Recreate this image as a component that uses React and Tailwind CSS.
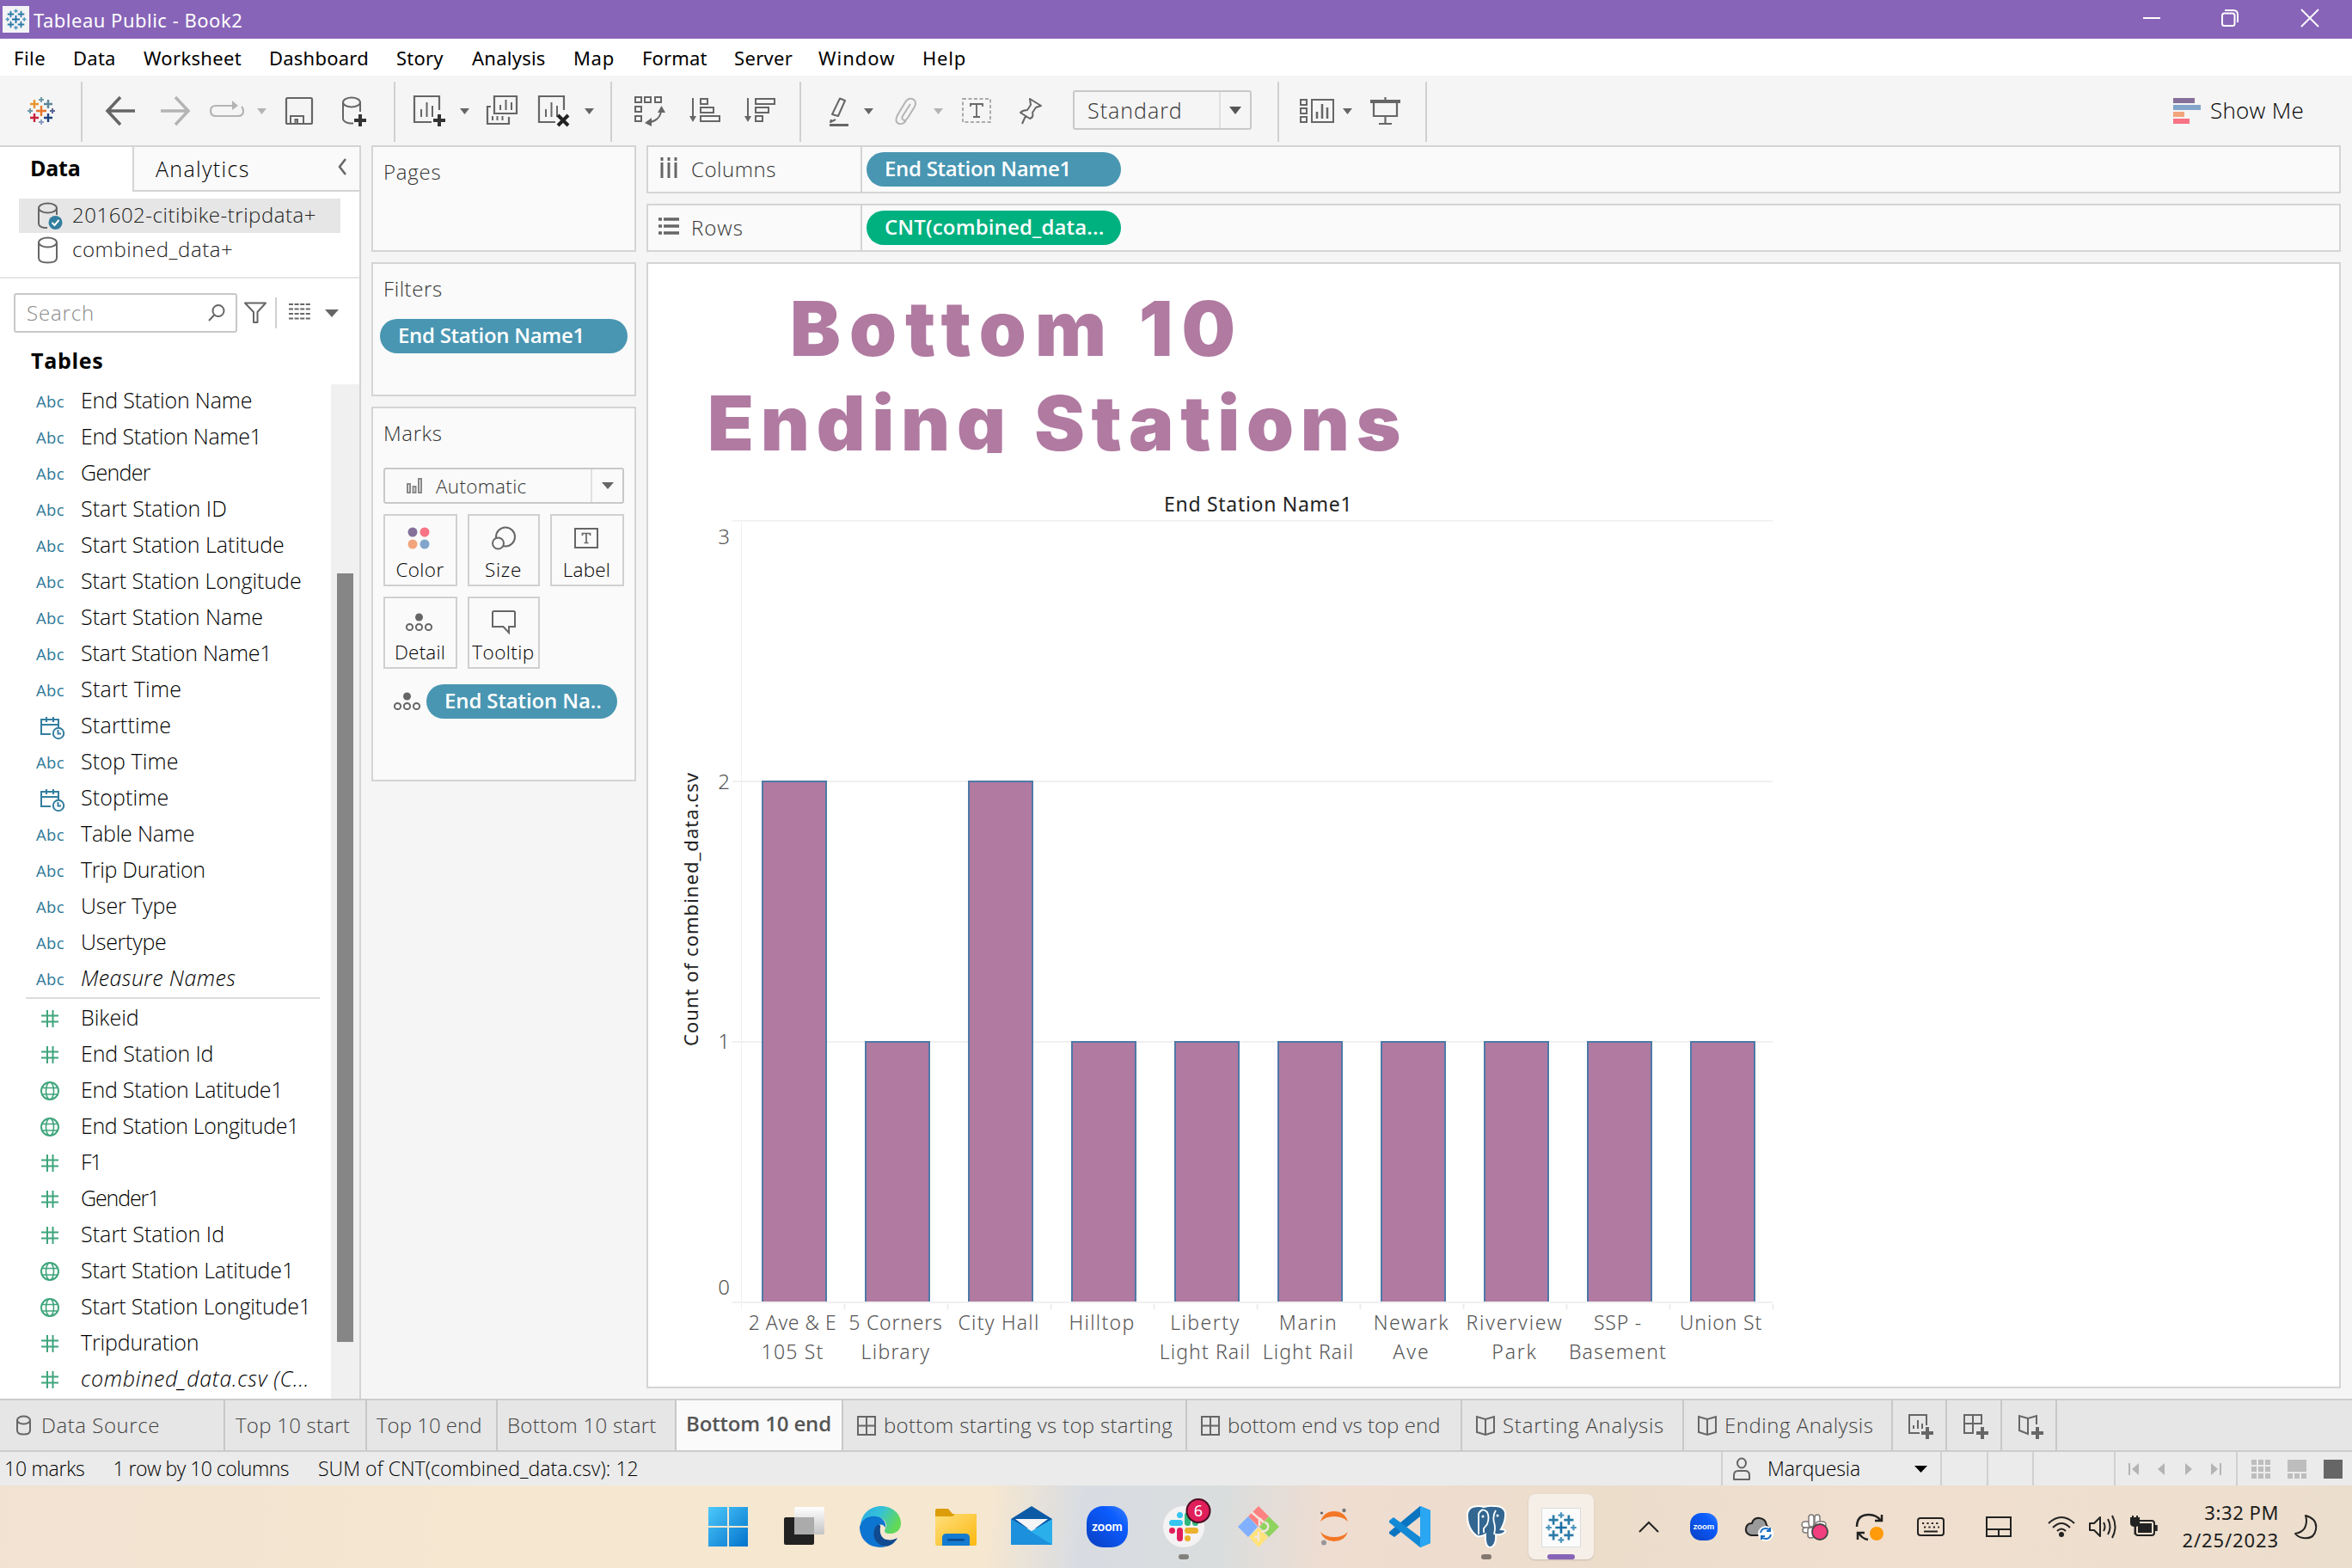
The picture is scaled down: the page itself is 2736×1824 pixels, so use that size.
import React, { useLayoutEffect, useRef, useState } from "react";

/* Single-line text whose tracking is tuned so that it spans exactly `w` pixels. */
function T({ w, className = "", children }) {
  const ref = useRef(null);
  const [spacing, setSpacing] = useState(0);
  useLayoutEffect(() => {
    if (w) setSpacing((w + 2 - ref.current.offsetWidth) / String(children).length);
  }, [w, children]);
  return (
    <span ref={ref} className={"inline-block shrink-0 whitespace-pre " + className} style={{ letterSpacing: spacing }}>
      {children}
    </span>
  );
}

function Ico({ w, h = 36, className = "", children }) {
  return (
    <svg
      width={w}
      height={h}
      viewBox={`0 0 ${w} ${h}`}
      fill="none"
      stroke="#666"
      strokeWidth="2"
      className={"block shrink-0 overflow-visible " + className}
    >
      {children}
    </svg>
  );
}

const Plus = ({ x, y, r, c, s = 2 }) => (
  <path d={`M${x - r} ${y}H${x + r}M${x} ${y - r}V${y + r}`} stroke={c} strokeWidth={s} />
);

function Sparkle({ blue }) {
  const k = blue
    ? ["#1c6fa5", "#2b7ba8", "#2b7ba8", "#2b7ba8", "#2b7ba8", "#4c94bd", "#4c94bd", "#4c94bd", "#4c94bd"]
    : ["#e8762b", "#e8952f", "#5b879b", "#c9223b", "#1f447e", "#7199a6", "#8a9bc0", "#7199a6", "#5b6591"];
  return (
    <>
      <Plus x={16} y={18} r={6} c={k[0]} s={2.4} />
      <Plus x={8} y={10} r={5} c={k[1]} s={2.4} />
      <Plus x={24} y={10} r={5} c={k[2]} s={2.4} />
      <Plus x={8} y={26} r={5} c={k[3]} s={2.4} />
      <Plus x={24} y={26} r={5} c={k[4]} s={2.4} />
      <Plus x={16} y={5} r={3} c={k[5]} />
      <Plus x={16} y={31} r={3} c={k[6]} />
      <Plus x={3} y={18} r={3} c={k[7]} />
      <Plus x={29} y={18} r={3} c={k[8]} />
    </>
  );
}

const Caret = ({ className = "", c = "#666" }) => (
  <Ico w={11} className={className}>
    <path d="M0 15H11L5.500 22Z" fill={c} stroke="none" />
  </Ico>
);
const Sep = ({ className = "" }) => <div className={"-mt-4 h-[70px] w-[2px] shrink-0 bg-[#d0d0d0] " + className} />;

const MENU = [
  ["File", 35, "w-[69px]"],
  ["Data", 48, "w-[82px]"],
  ["Worksheet", 112, "w-[146px]"],
  ["Dashboard", 114, "w-[148px]"],
  ["Story", 53, "w-[88px]"],
  ["Analysis", 84, "w-[118px]"],
  ["Map", 46, "w-[80px]"],
  ["Format", 74, "w-[107px]"],
  ["Server", 66, "w-[98px]"],
  ["Window", 87, "w-[121px]"],
  ["Help", 49, "w-[60px]"],
];

function TitleBar() {
  return (
    <div className="flex h-[45px] items-center bg-[#8764b8] font-['Noto_Sans'] text-[22px] text-white">
      <div className="ml-[3px] flex h-[31px] w-[31px] items-center justify-center bg-[#f4f4f6]">
        <svg width="27" height="27" viewBox="0 0 32 36" fill="none">
          <Sparkle blue />
        </svg>
      </div>
      <T w={241} className="ml-[5px] leading-[40px]">Tableau Public - Book2</T>
      <Ico w={20} h={20} className="-mt-1 ml-auto">
        <path d="M0 10H20" stroke="#fff" />
      </Ico>
      <Ico w={20} h={20} className="-mt-1 ml-[71px]">
        <path d="M4 1H14Q19 1 19 6V15" stroke="#fff" />
        <rect x="1" y="4.500" width="14.500" height="14.500" rx="2.500" stroke="#fff" />
      </Ico>
      <Ico w={20} h={20} className="-mt-1 ml-[73px] mr-[39px]">
        <path d="M0 0L20 20M20 0L0 20" stroke="#fff" strokeWidth="1.800" />
      </Ico>
    </div>
  );
}

function MenuBar() {
  return (
    <div className="flex h-[43px] bg-white pl-4 font-['Noto_Sans'] text-[22px] leading-[44px] text-black">
      {MENU.map(([t, w, cls]) => (
        <div key={t} className={"shrink-0 " + cls}>
          <T w={w}>{t}</T>
        </div>
      ))}
    </div>
  );
}

function Toolbar() {
  return (
    <div className="flex h-[81px] items-start bg-[#f5f5f5] pt-[23px]">
      <Ico w={32} className="ml-8">
        <Sparkle />
      </Ico>
      <Sep className="ml-[30px]" />
      <Ico w={34} className="ml-[27px]">
        <path d="M17 2L2 18L17 34M2 18H34" strokeWidth="3.500" />
      </Ico>
      <Ico w={34} className="ml-[30px]">
        <path d="M17 2L32 18L17 34M0 18H32" stroke="#b4b4b4" strokeWidth="3.500" />
      </Ico>
      <Ico w={40} className="ml-[23px]">
        <path d="M30 12H7Q1 12 1 18T7 24H33Q39 24 39 18Q39 15 37 13" stroke="#b4b4b4" strokeWidth="2.200" />
        <path d="M26 6L33 12L26 17Z" fill="#b4b4b4" stroke="none" />
      </Ico>
      <Caret className="ml-[15px]" c="#b4b4b4" />
      <Ico w={32} className="ml-[22px]">
        <rect x="1" y="3" width="30" height="30" rx="1.500" strokeWidth="2.200" />
        <path d="M6 33V24H21V33M11.500 33V28H14V33" />
      </Ico>
      <Ico w={28} className="ml-[34px]">
        <ellipse cx="11" cy="8" rx="10" ry="5.500" />
        <path d="M1 8V27Q1 31 9 32.500H13M21 8V19" />
        <Plus x={21} y={29} r={7} c="#333" s={4} />
      </Ico>
      <Sep className="ml-[32px]" />
      <Ico w={37} className="ml-[21px]">
        <path d="M30 17V1H1V31H21" strokeWidth="2.200" />
        <path d="M9 25V16M15.500 25V8M22 25V12" />
        <Plus x={30} y={29} r={7} c="#333" s={4} />
      </Ico>
      <Caret className="ml-[17px]" />
      <Ico w={36} className="ml-[20px]">
        <path d="M9 1H35V21H9ZM5 13H1V33H26V25" strokeWidth="2.200" />
        <path d="M16 17V11M22.500 17V5M29 17V8M7 29V24M12.500 29V24M18.500 29V24" />
      </Ico>
      <Ico w={37} className="ml-[24px]">
        <path d="M30 17V1H1V31H20" strokeWidth="2.200" />
        <path d="M9 25V16M15.500 25V8M22 25V12" />
        <path d="M23 23L35 35M35 23L23 35" stroke="#222" strokeWidth="4" />
      </Ico>
      <Caret className="ml-[17px]" />
      <Sep className="ml-[19px]" />
      <Ico w={34} className="ml-[26px]">
        <path d="M1 2H8V8H1ZM12 2H19V8H12ZM24 2H31V8H24ZM1 13H8V19H1ZM1 24H8V30H1Z" />
        <path d="M31 18Q30 28 19 31" />
        <path d="M31.500 12L36 20H27Z M12 32L20 26V36Z" fill="#666" stroke="none" />
      </Ico>
      <Ico w={36} className="ml-[30px]">
        <path d="M4 3V26" />
        <path d="M0 24H8L4 31Z" fill="#666" stroke="none" />
        <path d="M13 4H21V10H13ZM13 14H28V20H13ZM13 24H35V30H13Z" />
      </Ico>
      <Ico w={36} className="ml-[28px]">
        <path d="M4 3V26" />
        <path d="M0 24H8L4 31Z" fill="#666" stroke="none" />
        <path d="M13 4H35V10H13ZM13 14H28V20H13ZM13 24H21V30H13Z" />
      </Ico>
      <Sep className="ml-[28px]" />
      <Ico w={24} className="ml-[32px]">
        <path d="M1 34.500H23" strokeWidth="3" />
        <path d="M13 3.500L19 6L11 24L4 22ZM3 28L2 31L8 28" strokeLinejoin="round" />
      </Ico>
      <Caret className="ml-[17px]" />
      <Ico w={26} className="ml-[25px]">
        <path
          d="M18 10L9 24Q7 28 11 29Q13 29 15 26L23 13Q26 6 20 4Q15 3 12 8L3 23Q-1 31 5 33Q10 34 13 29"
          stroke="#b4b4b4"
        />
      </Ico>
      <Caret className="ml-[19px]" c="#b4b4b4" />
      <Ico w={34} className="ml-[22px]">
        <rect x="1" y="4" width="32" height="27" stroke="#aaa" strokeDasharray="4 2.500" />
        <path d="M10 13V10H24V13M17 10V25M13 25H21" strokeWidth="1.800" />
      </Ico>
      <Ico w={26} className="ml-[33px]">
        <path d="M12 4L25 12L19 14L15 20Q17 25 12 27L1 20Q4 17 9 17L13 11ZM7 24L3 33" strokeLinejoin="round" />
      </Ico>
      <div className="-mt-1.5 ml-[36px] flex h-[46px] w-[208px] items-center rounded-[3px] border-2 border-[#c8c8c8] bg-[#f5f5f5] text-[25px] font-light leading-[40px] text-[#333]">
        <T w={109} className="ml-[15px]">Standard</T>
        <div className="ml-auto flex h-full w-[36px] items-center justify-center border-l-2 border-[#e0e0e0]">
          <svg width="14" height="9" viewBox="0 0 14 9">
            <path d="M0 0H14L7 9Z" fill="#555" />
          </svg>
        </div>
      </div>
      <Sep className="ml-[30px]" />
      <Ico w={40} className="ml-[24px]">
        <path d="M1 5H8V11H1ZM1 15H8V21H1ZM1 25H8V31H1ZM14 5H39V31H14Z" />
        <path d="M20 27V19M26 27V10M32 27V14" strokeWidth="2.500" />
      </Ico>
      <Caret className="ml-[10px]" />
      <Ico w={36} className="ml-[21px]">
        <path d="M0 7H35" strokeWidth="4" />
        <path d="M4 8V24H31V8M17.500 2V6M17.500 24V33M10 33H25" strokeWidth="2.200" />
      </Ico>
      <Sep className="ml-[28px]" />
      <Ico w={32} className="ml-auto">
        <path d="M0 6H25" stroke="#85709a" strokeWidth="6" />
        <path d="M0 14H32" stroke="#82a5cb" strokeWidth="6" />
        <path d="M0 22H13" stroke="#f2a57c" strokeWidth="6" />
        <path d="M0 30H19" stroke="#f87384" strokeWidth="6" />
      </Ico>
      <T w={107} className="ml-[11px] mr-[56px] text-[26px] font-light leading-[35px] text-black">Show Me</T>
    </div>
  );
}

const Cylinder = ({ checked }) => (
  <Ico w={30} h={32}>
    <ellipse cx="11.500" cy="7" rx="10.500" ry="5.500" />
    {checked ? (
      <>
        <path d="M1 7V25Q1 29 8 30H11M22 7V15" />
        <circle cx="20.500" cy="24" r="8" fill="#337e9f" stroke="none" />
        <path d="M16.500 24L19.500 27L24.500 21" stroke="#fff" />
      </>
    ) : (
      <path d="M1 7V25Q1 30.500 11.500 30.500T22 25V7" />
    )}
  </Ico>
);

const DIMS = [
  ["End Station Name", 197],
  ["End Station Name1", 208],
  ["Gender", 79],
  ["Start Station ID", 168],
  ["Start Station Latitude", 235],
  ["Start Station Longitude", 255],
  ["Start Station Name", 210],
  ["Start Station Name1", 220],
  ["Start Time", 115],
  ["Starttime", 103, "date"],
  ["Stop Time", 112],
  ["Stoptime", 100, "date"],
  ["Table Name", 130],
  ["Trip Duration", 143],
  ["User Type", 110],
  ["Usertype", 98],
  ["Measure Names", 178, "abc", true],
];
const MEASURES = [
  ["Bikeid", 66],
  ["End Station Id", 152],
  ["End Station Latitude1", 233, "geo"],
  ["End Station Longitude1", 252, "geo"],
  ["F1", 22],
  ["Gender1", 89],
  ["Start Station Id", 165],
  ["Start Station Latitude1", 246, "geo"],
  ["Start Station Longitude1", 266, "geo"],
  ["Tripduration", 135],
  ["combined_data.csv (C...", 264, "num", true],
];

function FieldIcon({ kind }) {
  if (kind === "date")
    return (
      <Ico w={28} h={28} className="ml-[5px] mt-2">
        <path d="M12 21H1V4H21V13M1 10H21M7 1V7M15 1V7" stroke="#337e9f" />
        <circle cx="21" cy="20" r="6.200" stroke="#337e9f" />
        <path d="M20.500 16V20.500H24" stroke="#337e9f" />
      </Ico>
    );
  if (kind === "geo")
    return (
      <Ico w={22} h={22} className="ml-[5px] mt-1">
        <g stroke="#3fa57c">
          <circle cx="11" cy="11" r="10" />
          <ellipse cx="11" cy="11" rx="4.500" ry="10" strokeWidth="1.600" />
          <path d="M1.500 7.500H20.500M1.500 15H20.500" strokeWidth="1.600" />
        </g>
      </Ico>
    );
  if (kind === "num")
    return (
      <Ico w={20} h={20} className="ml-[6px] mt-1">
        <path d="M0 6.500H20M0 13.500H20M7 0V20M13.500 0V20" stroke="#3fa57c" />
      </Ico>
    );
  return <T w={31} className="mt-[3px] text-[18.500px] font-medium text-[#2f7898]">Abc</T>;
}

function Field({ f, fallback }) {
  const [label, w, kind, italic] = f;
  return (
    <div className="flex h-[42px] items-center">
      <div className="ml-[42px] flex w-[52px] shrink-0 items-center">
        <FieldIcon kind={kind || fallback} />
      </div>
      <T w={w} className={"text-[25px] font-light leading-[42px] text-black " + (italic ? "italic" : "")}>{label}</T>
    </div>
  );
}

function DataPane() {
  return (
    <div className="flex h-[1458px] w-[420px] shrink-0 flex-col border-r-2 border-t-2 border-[#d4d4d4] bg-white">
      <div className="flex h-[52px] shrink-0 text-[25px] text-black">
        <div className="w-[154px] shrink-0 pl-[35px] leading-[49px]">
          <T w={57} className="font-bold">Data</T>
        </div>
        <div className="flex flex-1 items-center border-b-2 border-l-2 border-[#d4d4d4] bg-[#fafafa]">
          <T w={108} className="ml-[25px] font-light leading-[50px]">Analytics</T>
          <Ico w={10} h={20} className="-mt-1 ml-auto mr-[15px]">
            <path d="M9 1L2 10L9 19" strokeWidth="2.500" />
          </Ico>
        </div>
      </div>
      <div className="mt-[8px] ml-[22px] flex h-[40px] w-[374px] shrink-0 items-center self-start bg-[#e6e6e6] pl-[22px] text-[24px] font-light text-[#222]">
        <Cylinder checked />
        <T w={282} className="ml-[10px] leading-[38px] -mt-[2px]">201602-citibike-tripdata+</T>
      </div>
      <div className="ml-[44px] flex h-[40px] shrink-0 items-center text-[24px] font-light text-[#222]">
        <Cylinder />
        <T w={185} className="ml-[10px] leading-[38px] -mt-[2px]">combined_data+</T>
      </div>
      <div className="mt-[11px] h-[2px] shrink-0 bg-[#e6e6e6]" />
      <div className="mt-[17px] flex h-[46px] shrink-0 items-center pl-4">
        <div className="flex h-[46px] w-[260px] items-center rounded-[3px] border-2 border-[#c8c8c8]">
          <T w={77} className="ml-[13px] text-[24px] font-light text-[#8a8a8a]">Search</T>
          <Ico w={20} h={20} className="ml-auto mr-[12px]">
            <circle cx="12" cy="7.500" r="6.500" />
            <path d="M7.500 12L1 19" />
          </Ico>
        </div>
        <Ico w={26} h={26} className="ml-[8px]">
          <path d="M1 1.500H25L15.500 12V24H11V12Z" strokeLinejoin="round" />
        </Ico>
        <div className="ml-[10px] h-[36px] w-[2px] bg-[#d0d0d0]" />
        <Ico w={25} h={20} className="ml-[14px] -mt-1">
          <path d="M0 2H25M0 7.500H25M0 13H25M0 18.500H25" strokeDasharray="5 1.600" strokeWidth="2.200" />
        </Ico>
        <Ico w={16} h={9} className="ml-[17px]">
          <path d="M0 0H16L8 9Z" fill="#666" stroke="none" />
        </Ico>
      </div>
      <T w={82} className="ml-[36px] mt-[12px] h-[48px] self-start text-[25px] font-bold leading-[40px] text-black">Tables</T>
      <div className="flex min-h-0 flex-1">
        <div className="-mt-[3px] w-[385px] shrink-0">
          {DIMS.map((f) => (
            <Field key={f[0]} f={f} fallback="abc" />
          ))}
          <div className="ml-[30px] mt-[2px] h-[2px] w-[342px] bg-[#dcdcdc]" />
          {MEASURES.map((f) => (
            <Field key={f[0]} f={f} fallback="num" />
          ))}
        </div>
        <div className="h-full flex-1 bg-[#f0f0f0] pt-[220px]">
          <div className="ml-[7px] h-[894px] w-[19px] bg-[#868686]" />
        </div>
      </div>
    </div>
  );
}

const DetailDots = () => (
  <Ico w={31} h={22}>
    <circle cx="15.500" cy="5" r="4.500" fill="#666" stroke="none" />
    <circle cx="4.500" cy="16.500" r="3.600" />
    <circle cx="15.500" cy="16.500" r="3.600" />
    <circle cx="26.500" cy="16.500" r="3.600" />
  </Ico>
);

const pill = "flex h-[40px] items-center rounded-[20px] pl-[21px] text-[24px] font-semibold leading-[36px] text-white ";

function MarkButton({ label, w, className, children }) {
  return (
    <div
      className={
        "flex h-[84px] shrink-0 flex-col items-center border-2 border-[#d0d0d0] text-[22.500px] text-black " + className
      }
    >
      <div className="flex h-[51px] items-center justify-center">{children}</div>
      <T w={w} className="-ml-px -mt-px font-light leading-[26px]">{label}</T>
    </div>
  );
}

function Cards() {
  const card = "shrink-0 border-2 border-[#d4d4d4] bg-[#fafafa] text-[24px] font-light text-[#333] ";
  return (
    <div className="ml-[12px] flex w-[308px] shrink-0 flex-col gap-[12px]">
      <div className={card + "h-[124px] pl-[12px] pt-[7px] leading-[43px]"}>
        <T w={66}>Pages</T>
      </div>
      <div className={card + "h-[156px] pl-[12px] pt-[7px] leading-[43px]"}>
        <T w={67}>Filters</T>
        <div className={pill + "-ml-[4px] mt-[14px] w-[288px] bg-[#4996b2]"}>
          <T w={215} className="-mt-[2px]">End Station Name1</T>
        </div>
      </div>
      <div className={card + "h-[436px] pl-[12px] pt-[7px] leading-[43px]"}>
        <T w={67}>Marks</T>
        <div className="mt-[19px] flex h-[42px] w-[280px] items-center rounded-[3px] border-2 border-[#c8c8c8] text-[22.500px]">
          <Ico w={18} h={20} className="ml-[25px]">
            <path d="M1 8H4V18H1ZM7.500 11H10.500V18H7.500ZM14 2H17V18H14Z" stroke="#888" />
          </Ico>
          <T w={104} className="ml-[16px] leading-[37px]">Automatic</T>
          <div className="ml-auto flex h-full w-[37px] items-center justify-center border-l-2 border-[#e0e0e0]">
            <svg width="14" height="8" viewBox="0 0 14 8">
              <path d="M0 0H14L7 8Z" fill="#666" />
            </svg>
          </div>
        </div>
        <div className="mt-[12px] flex gap-[12px]">
          <MarkButton label="Color" w={54} className="w-[86px]">
            <Ico w={26} h={26} className="-ml-1">
              <g stroke="none">
                <circle cx="6" cy="6" r="5.500" fill="#85709a" />
                <circle cx="20" cy="6" r="5.500" fill="#f87384" />
                <circle cx="6" cy="20" r="5.500" fill="#f2a57c" />
                <circle cx="20" cy="20" r="5.500" fill="#82a5cb" />
              </g>
            </Ico>
          </MarkButton>
          <MarkButton label="Size" w={41} className="w-[84px]">
            <Ico w={28} h={28}>
              <circle cx="16" cy="12.500" r="11" />
              <circle cx="7.500" cy="20" r="6.500" fill="#fafafa" />
            </Ico>
          </MarkButton>
          <MarkButton label="Label" w={53} className="w-[86px]">
            <Ico w={28} h={24} className="-ml-[2px]">
              <rect x="1" y="1" width="26" height="22" />
              <path d="M9.500 9V6.500H18.500V9M14 6.500V17.500M11.500 17.500H16.500" strokeWidth="1.700" />
            </Ico>
          </MarkButton>
        </div>
        <div className="mt-[12px] flex gap-[12px]">
          <MarkButton label="Detail" w={57} className="w-[86px]">
            <div className="-ml-1 mt-1">
              <DetailDots />
            </div>
          </MarkButton>
          <MarkButton label="Tooltip" w={70} className="w-[84px]">
            <Ico w={28} h={28} className="mt-1">
              <path d="M1 2.500Q1 1 2.500 1H25.500Q27 1 27 2.500V19H20V26L13.500 19H1Z" />
            </Ico>
          </MarkButton>
        </div>
        <div className="mt-[18px] flex items-center pl-[12px]">
          <DetailDots />
          <div className={pill + "ml-[7px] w-[222px] bg-[#4996b2]"}>
            <T w={181} className="-mt-[2px]">End Station Na..</T>
          </div>
        </div>
      </div>
    </div>
  );
}

function Shelf({ label, w, icon, children }) {
  return (
    <div className="flex h-[56px] shrink-0 items-center border-2 border-[#d4d4d4] bg-[#fafafa] text-[24px] font-light text-[#333]">
      <div className="flex h-full w-[249px] shrink-0 items-center border-r-2 border-[#d4d4d4] pl-[12px]">
        {icon}
        <T w={w} className="ml-[14px]">{label}</T>
      </div>
      {children}
    </div>
  );
}

const BARS = [
  [["2 Ave & E", 101], ["105 St", 71], 2],
  [["5 Corners", 107], ["Library", 79], 1],
  [["City Hall", 93], null, 2],
  [["Hilltop", 75], null, 1],
  [["Liberty", 79], ["Light Rail", 104], 1],
  [["Marin", 67], ["Light Rail", 104], 1],
  [["Newark", 87], ["Ave", 41], 1],
  [["Riverview", 111], ["Park", 51], 1],
  [["SSP -", 54], ["Basement", 112], 1],
  [["Union St", 94], null, 1],
];

function Chart() {
  return (
    <div className="flex h-[1310px] shrink-0 flex-col border-2 border-[#d4d4d4] bg-white font-['Noto_Sans']">
      <div className="h-[220px] shrink-0 overflow-hidden pt-[20px] font-['Inter'] text-[88px] font-black leading-[110px] text-[#b07aa1]">
        <div className="pl-[165px]">
          <T w={526}>Bottom 10</T>
        </div>
        <div className="pl-[69px]">
          <T w={812}>Ending Stations</T>
        </div>
      </div>
      <div className="h-[78px] shrink-0 pl-[600px] pt-[40px] text-[23px] font-normal leading-[38px] text-[#222]">
        <T w={217}>End Station Name1</T>
      </div>
      <div className="flex h-[919px] shrink-0">
        <div className="flex w-[66px] shrink-0 items-center justify-center">
          <T w={317} className="-mt-[14px] ml-[32px] -rotate-90 text-[22px] font-normal text-[#222]">Count of combined_data.csv</T>
        </div>
        <div className="w-[29px] shrink-0 text-right text-[24px] font-light leading-[38px] text-[#555]">
          <div>3</div>
          <div className="mt-[247px]">2</div>
          <div className="mt-[264px]">1</div>
          <div className="mt-[248px]">0</div>
        </div>
        <svg width="1215" height="919" viewBox="0 0 1215 919" className="ml-[3px] block shrink-0">
          <path d="M0 .5H1210M0 304H1210M0 607H1210M0 910H1210" stroke="#f0f0f0" strokeWidth="2" />
          <path d="M10.500 0V918" stroke="#f0f0f0" />
          {BARS.map(([, , v], i) => (
            <g key={i}>
              <rect x={35 + i * 120} y={910 - v * 303} width="74" height={v * 303 - 1} fill="#b07aa1" />
              <path
                d={`M${35 + i * 120} 909V${910 - v * 303}H${109 + i * 120}V909`}
                fill="none"
                stroke="#4e79a7"
                strokeWidth="2"
              />
              <path d={`M${130.5 + i * 120} 912V918`} stroke="#ececec" strokeWidth="2" />
            </g>
          ))}
        </svg>
      </div>
      <div className="-mt-[3px] ml-[108px] flex text-[23px] font-light leading-[34px] text-[#555]">
        {BARS.map(([a, b], i) => (
          <div key={i} className="flex w-[120px] shrink-0 flex-col items-center">
            <T w={a[1]}>{a[0]}</T>
            {b && <T w={b[1]}>{b[0]}</T>}
          </div>
        ))}
      </div>
    </div>
  );
}

function Workspace() {
  return (
    <div className="ml-[12px] flex w-[1971px] shrink-0 flex-col gap-[12px]">
      <Shelf
        label="Columns"
        w={97}
        icon={
          <Ico w={24} h={24} className="-mt-1">
            <path d="M4 0V4M12 0V4M20 0V4M4 6V24M12 6V24M20 6V24" strokeWidth="3" />
          </Ico>
        }
      >
        <div className={pill + "ml-[5px] w-[296px] bg-[#4996b2]"}>
          <T w={215} className="-mt-[2px]">End Station Name1</T>
        </div>
      </Shelf>
      <Shelf
        label="Rows"
        w={59}
        icon={
          <Ico w={24} h={22} className="-mt-1">
            <path d="M0 3H4M0 11H4M0 19H4M6 3H24M6 11H24M6 19H24" strokeWidth="3.600" />
          </Ico>
        }
      >
        <div className={pill + "ml-[5px] w-[296px] bg-[#00b180]"}>
          <T w={253} className="-mt-[2px]">CNT(combined_data...</T>
        </div>
      </Shelf>
      <Chart />
    </div>
  );
}

const GridIcon = () => (
  <Ico w={22} h={23}>
    <path d="M1 1H21V22H1ZM11 1V22M1 11.500H21" />
  </Ico>
);
const BookIcon = () => (
  <Ico w={22} h={24}>
    <path d="M1 2V20L11 23L21 20V2L11 5ZM11 5V23" />
  </Ico>
);

function Tab({ className, label, w, icon }) {
  return (
    <div className={"flex h-full shrink-0 items-center border-r-2 border-[#c8c8c8] " + className}>
      {icon}
      <T w={w} className="-mt-px leading-[58px]">{label}</T>
    </div>
  );
}

function SheetTabs() {
  return (
    <div className="flex h-[62px] items-stretch border-b-2 border-t-2 border-[#cccccc] bg-[#e6e6e6] text-[24px] font-light text-[#444]">
      <Tab
        className="w-[262px] gap-[12px] pl-[19px]"
        label="Data Source"
        w={136}
        icon={
          <Ico w={17} h={24}>
            <ellipse cx="8.500" cy="6" rx="7.500" ry="4.500" />
            <path d="M1 6V18Q1 22.500 8.500 22.500T16 18V6" />
          </Ico>
        }
      />
      <Tab className="w-[165px] pl-[12px]" label="Top 10 start" w={131} />
      <Tab className="w-[152px] pl-[11px]" label="Top 10 end" w={120} />
      <Tab className="w-[208px] pl-[11px]" label="Bottom 10 start" w={172} />
      <Tab className="w-[194px] bg-[#fafafa] pb-1 pl-[11px] font-semibold text-[#555]" label="Bottom 10 end" w={167} />
      <Tab className="w-[400px] gap-[9px] pl-[16px]" label="bottom starting vs top starting" w={334} icon={<GridIcon />} />
      <Tab className="w-[320px] gap-[9px] pl-[16px]" label="bottom end vs top end" w={246} icon={<GridIcon />} />
      <Tab className="w-[258px] gap-[9px] pl-[16px]" label="Starting Analysis" w={186} icon={<BookIcon />} />
      <Tab className="w-[243px] gap-[9px] pl-[16px]" label="Ending Analysis" w={172} icon={<BookIcon />} />
      <div className="w-[63px] border-r-2 border-[#c8c8c8] pl-[18px] pt-4">
        <Ico w={29} h={29}>
          <path d="M21 13V1H1V22H13M6 17V13M11 17V7M16 17V11" />
          <Plus x={22} y={22} r={7} c="#666" s={4} />
        </Ico>
      </div>
      <div className="w-[64px] border-r-2 border-[#c8c8c8] pl-[19px] pt-4">
        <Ico w={29} h={29}>
          <path d="M21 12V1H1V22H12M11 1V22M1 11H21" />
          <Plus x={22} y={22} r={7} c="#666" s={4} />
        </Ico>
      </div>
      <div className="w-[64px] border-r-2 border-[#c8c8c8] pl-[19px] pt-4">
        <Ico w={29} h={29}>
          <path d="M21 12V2L11 5L1 2V19L11 23V5" />
          <Plus x={22} y={22} r={7} c="#666" s={4} />
        </Ico>
      </div>
    </div>
  );
}

function StatusBar() {
  const cell = "h-full shrink-0 border-l-2 border-[#d0d0d0] ";
  return (
    <div className="flex h-[39px] items-center bg-[#ebebeb] text-[23px] font-light leading-[36px] text-black">
      <T w={92} className="ml-[5px] -mt-px">10 marks</T>
      <T w={202} className="ml-[33px] -mt-px">1 row by 10 columns</T>
      <T w={371} className="ml-[34px] -mt-px">SUM of CNT(combined_data.csv): 12</T>
      <div className={cell + "ml-auto flex w-[255px] items-center"}>
        <Ico w={20} h={26} className="ml-[12px]">
          <ellipse cx="10" cy="6" rx="5" ry="5.500" />
          <path d="M1 25V20Q1 15 6 15H14Q19 15 19 20V25Z" strokeLinejoin="round" />
        </Ico>
        <T w={106} className="ml-[20px] -mt-px">Marquesia</T>
        <Ico w={15} h={8} className="ml-[63px]">
          <path d="M0 0H15L7.500 8Z" fill="#000" stroke="none" />
        </Ico>
      </div>
      <div className={cell + "w-[54px]"} />
      <div className={cell + "w-[53px]"} />
      <div className={cell + "w-[95px]"} />
      <div className={cell + "flex w-[142px] items-center pl-[15px]"}>
        <Ico w={108} h={16}>
          <g fill="#b4b4b4" stroke="none">
            <path d="M0 1H2V15H0ZM12 1V15L4 8ZM42 1V15L34 8ZM66 1V15L74 8ZM96 1V15L104 8ZM106 1H108V15H106Z" />
          </g>
        </Ico>
      </div>
      <div className={cell + "flex w-[135px] items-center pl-[16px]"}>
        <Ico w={106} h={22}>
          <g fill="#bdbdbd" stroke="none">
            {[0, 8, 16].map((x) => (
              <React.Fragment key={x}>
                <rect x={x} y="0" width="6" height="6" />
                <rect x={x} y="8" width="6" height="6" />
                <rect x={x} y="16" width="6" height="6" />
                <rect x={x + 42} y="16" width="6" height="6" />
              </React.Fragment>
            ))}
            <rect x="42" y="0" width="22" height="14" />
            <rect x="84" y="0" width="22" height="22" fill="#666" />
          </g>
        </Ico>
      </div>
    </div>
  );
}

function AppIcon({ children, className = "" }) {
  return (
    <svg width="48" height="48" viewBox="0 0 48 48" className={"block shrink-0 overflow-visible " + className}>
      {children}
    </svg>
  );
}

const SlackMark = () => (
  <g>
    <rect x="7" y="16" width="16" height="7" rx="3.500" fill="#36c5f0" />
    <rect x="16" y="7" width="7" height="7" rx="3.500" fill="#36c5f0" />
    <rect x="25" y="7" width="7" height="16" rx="3.500" fill="#2eb67d" />
    <rect x="34" y="16" width="7" height="7" rx="3.500" fill="#2eb67d" />
    <rect x="25" y="25" width="16" height="7" rx="3.500" fill="#ecb22e" />
    <rect x="25" y="34" width="7" height="7" rx="3.500" fill="#ecb22e" />
    <rect x="16" y="25" width="7" height="16" rx="3.500" fill="#e01e5a" />
    <rect x="7" y="25" width="7" height="7" rx="3.500" fill="#e01e5a" />
  </g>
);

function Taskbar() {
  return (
    <div className="flex h-[96px] items-center overflow-hidden bg-[linear-gradient(95deg,#f1e2d2_0%,#f6e7d1_20%,#f6e7d0_42%,#d8dce2_46%,#dadddd_52%,#efddd1_56.5%,#ecddcb_68%,#f0dfcf_80%,#ecdecd_100%)]">
      <svg width="0" height="0">
        <defs>
          <linearGradient id="win" x1="0" y1="0" x2="1" y2="1">
            <stop offset="0" stopColor="#4cc9fb" />
            <stop offset="1" stopColor="#0272cc" />
          </linearGradient>
          <linearGradient id="edge" x1="0" y1="0" x2="1" y2="0.400">
            <stop offset="0" stopColor="#2ba9e6" />
            <stop offset="0.500" stopColor="#35c1d8" />
            <stop offset="1" stopColor="#62d957" />
          </linearGradient>
          <linearGradient id="fold" x1="0" y1="0" x2="1" y2="1">
            <stop offset="0" stopColor="#ffdf7e" />
            <stop offset="1" stopColor="#fbb80f" />
          </linearGradient>
          <linearGradient id="gray" x1="0" y1="0" x2="0" y2="1">
            <stop offset="0" stopColor="#fff" />
            <stop offset="1" stopColor="#c4c4c4" />
          </linearGradient>
          <linearGradient id="zoom" x1="1" y1="0" x2="0" y2="1">
            <stop offset="0" stopColor="#3a80ff" />
            <stop offset="0.300" stopColor="#0b5cff" />
            <stop offset="1" stopColor="#0a3fc0" />
          </linearGradient>
        </defs>
      </svg>
      <AppIcon className="ml-[823px]">
        <path d="M1 1H23V23H1ZM25 1H47V23H25ZM1 25H23V47H1ZM25 25H47V47H25Z" fill="url(#win)" />
      </AppIcon>
      <AppIcon className="ml-[40px]">
        <rect x="1" y="13" width="35" height="32" rx="2" fill="#222" />
        <rect x="13" y="1" width="35" height="32" rx="2" fill="url(#gray)" />
        <rect x="13" y="13" width="23" height="20" fill="#ababab" />
      </AppIcon>
      <AppIcon className="ml-[41px]">
        <path d="M1 22C2 9 12 0 25 0C38 0 48 9 48 20C48 28 42 32 35 32C29 32 28 29 30 26C33 20 28 13 20 13C10 13 3 18 1 22Z" fill="url(#edge)" />
        <path d="M0 24C3 14 12 11 19 12C27 13 31 19 30 25C26 18 17 22 17 31C17 39 23 46 31 47C14 51 0 41 0 24Z" fill="#0c74d1" />
        <path d="M17 28C14 40 24 48 33 46.500C38 45 42 41 44 37C40 39 36 40 32 39C26 38 23 33 24 25C25 20 19 20 17 28Z" fill="#114a8f" />
      </AppIcon>
      <AppIcon className="ml-[40px]">
        <path d="M0 5Q0 3 2 3H15L20 9H46Q48 9 48 11V20H0Z" fill="#dd9d0a" />
        <path d="M0 12H20L23 9H46Q48 9 48 11V44Q48 46 46 46H2Q0 46 0 44Z" fill="url(#fold)" />
        <path d="M8 46V37Q8 32 13 32H35Q40 32 40 37V46Z" fill="#147bd0" />
        <rect x="14" y="38" width="20" height="2.500" rx="1" fill="#0b4a8c" />
      </AppIcon>
      <AppIcon className="ml-[40px]">
        <path d="M0 15L24 0L48 15V26H0Z" fill="#0b5aa6" />
        <path d="M0 15L24 29L48 15V45H0Z" fill="#2bafeb" />
        <path d="M0 15V45H48Z" fill="#1c90dc" />
        <path d="M5 15H43L24 29Z" fill="#f4f5f7" />
      </AppIcon>
      <AppIcon className="ml-[40px]">
        <rect width="48" height="48" rx="19" fill="url(#zoom)" />
        <text x="24" y="28.500" textAnchor="middle" fontSize="14.500" fontWeight="700" fontFamily="Lato, sans-serif" fill="#fff">zoom</text>
      </AppIcon>
      <AppIcon className="ml-[41px]">
        <circle cx="24" cy="24" r="24" fill="#f4f2f2" />
        <SlackMark />
        <circle cx="41" cy="5.500" r="13.500" fill="#e01e5a" stroke="#4a0d22" strokeWidth="2" />
        <text x="41" y="12" textAnchor="middle" fontSize="18" fontFamily="Noto Sans, sans-serif" fill="#fff">6</text>
        <rect x="18" y="56" width="12" height="6" rx="3" fill="#83817c" />
      </AppIcon>
      <AppIcon className="ml-[39px]">
        <path d="M24 0L36 12L24 24L12 12Z" fill="#ff8080" />
        <path d="M12 12L23 24L12 36L0 24Z" fill="#80b0ff" />
        <path d="M36 12L48 24L36 36L25 24Z" fill="#8fd35f" />
        <path d="M24 25L35 36L24 48L13 36Z" fill="#ffe27a" />
        <path d="M16 7L25 15V23M25 14L30 19M27 29Q34 30 35 25T31 19M24 30V41M24 36H19" fill="none" stroke="#f1e6dd" strokeWidth="2.500" />
      </AppIcon>
      <AppIcon className="ml-[40px]">
        <path d="M8 18Q12 6 24 6T40 18Q34 12 24 12T8 18ZM8 30Q12 41 24 41T40 30Q34 36 24 36T8 30Z" fill="#f37726" />
        <circle cx="35.500" cy="5" r="2.200" fill="#767677" />
        <circle cx="9.500" cy="8" r="1.600" fill="#616262" />
        <circle cx="12" cy="42.500" r="3" fill="#989798" />
      </AppIcon>
      <AppIcon className="ml-[40px]">
        <path d="M36 0L48 5V43L36 48V12L6 36L0 32V30Z" fill="#0a74c0" />
        <path d="M0 17L5 13L36 36V48L0 19Z" fill="#1389d6" />
        <path d="M36 0L48 5V43L36 48Z" fill="#2aa6f2" />
      </AppIcon>
      <svg width="50" height="50" viewBox="0 0 50 50" className="ml-[40px] block shrink-0 overflow-visible">
        <path
          d="M9 2Q17 0 22 2Q30 0 34 1Q44 0 47 8Q48 18 42 28Q48 28 47 31Q43 35 36 34Q37 47 30 49Q23 49 24 34Q16 38 13 35Q2 26 3 10Q4 4 9 2Z"
          fill="#336791"
          stroke="#fff"
          strokeWidth="2"
        />
        <path d="M16 34V10Q20 2 26 8Q29 14 26 22L22 27V32M34 34Q36 26 34 20Q32 12 36 6" fill="none" stroke="#fff" strokeWidth="1.800" />
        <circle cx="21" cy="13" r="1.500" fill="#fff" />
        <circle cx="38" cy="12" r="1.500" fill="#fff" />
        <rect x="19" y="57" width="12" height="6" rx="3" fill="#83786f" />
      </svg>
      <div className="ml-[24px] flex h-[76px] w-[76px] shrink-0 flex-col items-center rounded-lg bg-[#f6efe8] pt-[16px] shadow-[0_1px_2px_rgba(0,0,0,0.15)]">
        <div className="flex h-[46px] w-[46px] items-center justify-center border border-[#dcdcdc] bg-[#fbfbfb]">
          <svg width="40" height="40" viewBox="0 0 32 36" fill="none">
            <Sparkle blue />
          </svg>
        </div>
        <div className="mt-[8px] h-[6px] w-[32px] rounded-full bg-[#8764b8]" />
      </div>
      <Ico w={24} h={14} className="ml-[52px]">
        <path d="M1 13L12 2L23 13" stroke="#222" />
      </Ico>
      <Ico w={32} h={32} className="ml-[36px]">
        <rect width="32" height="32" rx="13" fill="url(#zoom)" stroke="none" />
        <text x="16" y="19" textAnchor="middle" fontSize="10" fontWeight="700" fontFamily="Lato, sans-serif" fill="#fff" stroke="none">zoom</text>
      </Ico>
      <Ico w={32} h={32} className="ml-[32px]">
        <path d="M7 26Q0 24 1 18T8 12Q10 5 17 6T25 14L28 18V26Z" fill="#9a9a9a" stroke="#222" />
        <circle cx="24" cy="24" r="9" fill="#fff" stroke="none" />
        <path d="M18 23Q19 18 24 18Q28 18 29 21M29 17V21H25M30 25Q29 30 24 30Q20 30 19 27M19 31V27H23" stroke="#1a6fc4" />
      </Ico>
      <Ico w={32} h={32} className="ml-[33px]">
        <g fill="#fff" stroke="#7d7777" strokeWidth="1.500">
          <rect x="1" y="10" width="13" height="7" rx="3.500" />
          <rect x="9" y="2" width="6" height="14" rx="3" />
          <rect x="16" y="2" width="6" height="14" rx="3" />
          <rect x="17" y="10" width="12" height="7" rx="3.500" />
          <rect x="2" y="17" width="13" height="6" rx="3" />
          <rect x="8" y="17" width="7" height="12" rx="3" />
        </g>
        <circle cx="22" cy="22" r="9" fill="#f23d7f" stroke="#444" strokeWidth="1.800" />
      </Ico>
      <Ico w={34} h={32} className="ml-[31px]">
        <path d="M2 16Q2 2 16 2Q25 2 30 9M31 2V9H23M3 31V23H11M4 23Q8 30 15 31" stroke="#222" strokeWidth="2.500" />
        <circle cx="25" cy="24" r="8" fill="#ff9a0a" stroke="none" />
      </Ico>
      <Ico w={32} h={22} className="ml-[38px]">
        <rect x="1" y="1" width="30" height="20" rx="3" stroke="#222" />
        <path d="M6 7H27M8 11.500H26" strokeDasharray="2.200 3.200" stroke="#222" />
        <path d="M8 16.500H24" stroke="#222" />
      </Ico>
      <Ico w={30} h={24} className="ml-[48px]">
        <path d="M1 1H29V23H1ZM1 15H29M15 15V23" stroke="#222" />
      </Ico>
      <Ico w={32} h={26} className="ml-[42px]">
        <path d="M1 9Q16-5 31 9M6 14Q16 4 26 14M11 18Q16 13 21 18" stroke="#222" />
        <circle cx="16" cy="22" r="3" fill="#222" stroke="none" />
      </Ico>
      <Ico w={32} h={28} className="ml-[16px]">
        <path d="M1 10H6L13 3V25L6 18H1ZM17 9Q20 14 17 19M22 5Q27 14 22 23M27 1Q34 14 27 27" stroke="#222" strokeLinejoin="round" />
      </Ico>
      <Ico w={32} h={26} className="ml-[16px]">
        <rect x="6" y="6" width="22" height="17" rx="3" stroke="#222" />
        <rect x="9" y="9" width="16" height="11" fill="#222" stroke="none" />
        <path d="M30 11V18" stroke="#222" strokeWidth="3.500" />
        <path d="M1 3H10V9Q10 12 5.500 12T1 9ZM3 0V4M8 0V4M5.500 11V22" fill="#222" stroke="#222" />
      </Ico>
      <div className="-mt-[3px] ml-[25px] flex w-[116px] shrink-0 flex-col items-end font-['Noto_Sans'] text-[22px] leading-[32px] text-[#1c1c1c]">
        <T w={85}>3:32 PM</T>
        <T w={110}>2/25/2023</T>
      </div>
      <Ico w={26} h={28} className="ml-[18px]">
        <path d="M13 1Q27 5 25 17T10 27Q4 26 1 22Q11 20 13 13Q15 7 13 1Z" stroke="#222" strokeLinejoin="round" />
      </Ico>
    </div>
  );
}

export default function App() {
  return (
    <div className="h-[1824px] w-[2736px] overflow-hidden bg-[#f5f5f5] font-['Open_Sans',sans-serif]">
      <TitleBar />
      <MenuBar />
      <Toolbar />
      <div className="flex h-[1458px] items-start overflow-hidden">
        <DataPane />
        <Cards />
        <Workspace />
      </div>
      <SheetTabs />
      <StatusBar />
      <Taskbar />
    </div>
  );
}
